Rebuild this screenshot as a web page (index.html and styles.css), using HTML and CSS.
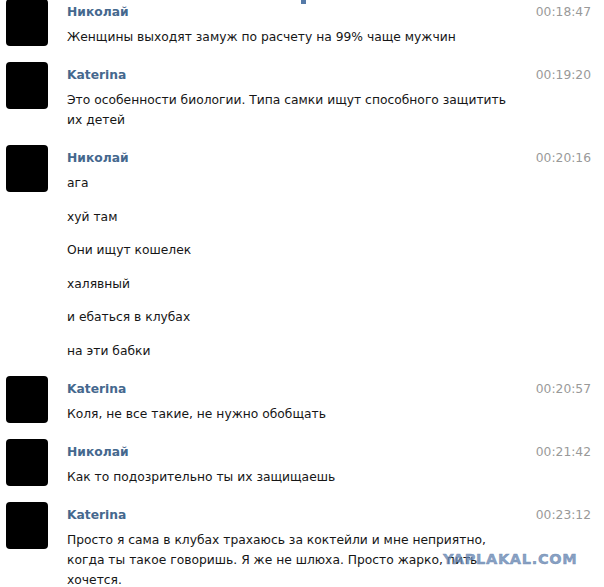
FILE: index.html
```html
<!DOCTYPE html>
<html lang="ru">

<head>
    <meta charset="UTF-8" />
    <title>Диалог</title>
    <link rel="stylesheet" href="styles.css">
</head>

<body>

    <div class="chat">

        <div class="msg-row first">
            <div class="avatar"></div>
            <div class="msg-body">
                <div class="msg-head">
                    <span class="author">Николай</span>
                    <span class="time">00:18:47</span>
                </div>
                <div class="msg-text">Женщины выходят замуж по расчету на 99% чаще мужчин</div>
            </div>
        </div>

        <div class="msg-row">
            <div class="avatar"></div>
            <div class="msg-body">
                <div class="msg-head">
                    <span class="author">Katerina</span>
                    <span class="time">00:19:20</span>
                </div>
                <div class="msg-text">Это особенности биологии. Типа самки ищут способного защитить их детей</div>
            </div>
        </div>

        <div class="msg-row">
            <div class="avatar"></div>
            <div class="msg-body">
                <div class="msg-head">
                    <span class="author">Николай</span>
                    <span class="time">00:20:16</span>
                </div>
                <div class="msg-text">ага</div>
                <div class="msg-text">хуй там</div>
                <div class="msg-text">Они ищут кошелек</div>
                <div class="msg-text">халявный</div>
                <div class="msg-text">и ебаться в клубах</div>
                <div class="msg-text">на эти бабки</div>
            </div>
        </div>

        <div class="msg-row">
            <div class="avatar"></div>
            <div class="msg-body">
                <div class="msg-head">
                    <span class="author">Katerina</span>
                    <span class="time">00:20:57</span>
                </div>
                <div class="msg-text">Коля, не все такие, не нужно обобщать</div>
            </div>
        </div>

        <div class="msg-row">
            <div class="avatar"></div>
            <div class="msg-body">
                <div class="msg-head">
                    <span class="author">Николай</span>
                    <span class="time">00:21:42</span>
                </div>
                <div class="msg-text">Как то подозрительно ты их защищаешь</div>
            </div>
        </div>

        <div class="msg-row">
            <div class="avatar"></div>
            <div class="msg-body">
                <div class="msg-head">
                    <span class="author">Katerina</span>
                    <span class="time">00:23:12</span>
                </div>
                <div class="msg-text">Просто я сама в клубах трахаюсь за коктейли и мне неприятно, когда ты такое говоришь. Я же не шлюха. Просто жарко, пить хочется.</div>
            </div>
        </div>

        <span class="top-mark"></span>
        <span class="watermark">YAPLAKAL.COM</span>
    </div>

</body>

</html>
```

FILE: styles.css
```css
:root {
    --author: #45688e;
    --text: #161616;
    --time: #999999;
}

* {
    box-sizing: border-box
}

body {
    margin: 0;
    background: #fff;
    font-family: "DejaVu Sans", Tahoma, sans-serif;
    font-size: 12.3px;
    color: var(--text);
}

.chat {
    position: relative;
    width: 604px;
    height: 587px;
    overflow: hidden;
}

.msg-row {
    display: flex;
    padding: 0 13px 15px 6px;
}

.msg-row.first {
    margin-top: -1px
}

.avatar {
    flex: none;
    width: 42px;
    height: 47px;
    background: #000;
    border-radius: 4px;
}

.msg-body {
    flex: 1;
    padding: 3px 0 0 19px;
}

.msg-head {
    display: flex;
    justify-content: space-between;
    line-height: 20px;
    margin-bottom: 5px;
}

.author {
    font-weight: bold;
    color: var(--author);
}

.time {
    color: var(--time)
}

.msg-text {
    line-height: 20px;
    max-width: 446px;
}

.msg-text + .msg-text {
    margin-top: 13.5px
}

.top-mark {
    position: absolute;
    left: 301px;
    top: 0;
    width: 5px;
    height: 4px;
    background: #557aa8;
}

.watermark {
    position: absolute;
    left: 443px;
    top: 551px;
    font-family: "DejaVu Sans", sans-serif;
    font-weight: bold;
    font-size: 14.5px;
    letter-spacing: 0.7px;
    -webkit-text-stroke: 0.5px rgba(105, 135, 178, 0.8);
    color: rgba(105, 135, 178, 0.8);
}
```
